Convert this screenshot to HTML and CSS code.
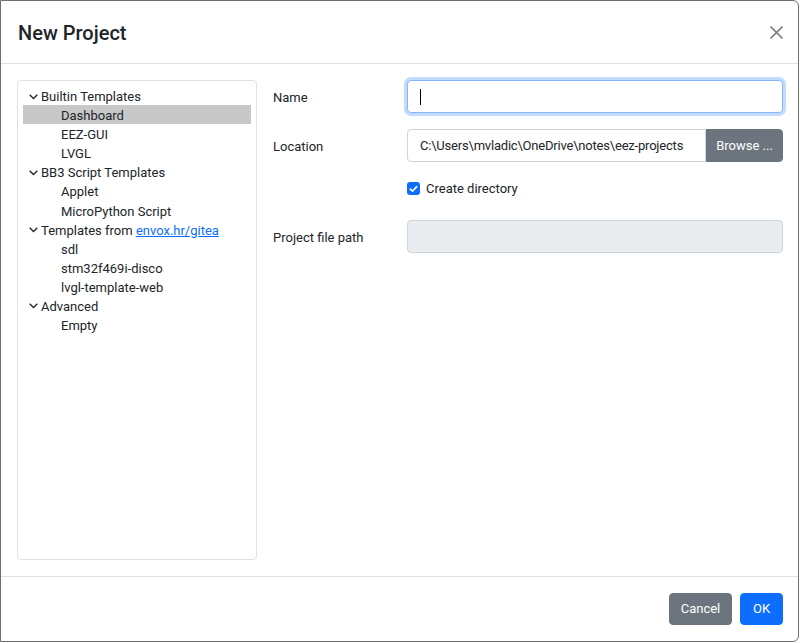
FILE: index.html
```html
<!DOCTYPE html>
<html>
<head>
<meta charset="utf-8">
<link rel="stylesheet" href="styles.css">
</head>
<body>
<div class="modal">
  <div class="modal-header">
    <h5 class="modal-title">New Project</h5>
    <button class="btn-close" aria-label="Close">
      <svg width="13" height="13" viewBox="0 0 13 13"><path d="M0.5 0.5 L12.5 12.5 M12.5 0.5 L0.5 12.5" stroke="#808080" stroke-width="1.6" fill="none"/></svg>
    </button>
  </div>
  <div class="modal-body">
    <div class="tree">
      <div class="tree-row group"><span class="chev"><svg width="9" height="6" viewBox="0 0 9 6"><path d="M0.7 0.7 L4.5 4.5 L8.3 0.7" stroke="#212529" stroke-width="1.3" fill="none"/></svg></span>Builtin Templates</div>
      <div class="tree-row item selected">Dashboard</div>
      <div class="tree-row item">EEZ-GUI</div>
      <div class="tree-row item">LVGL</div>
      <div class="tree-row group"><span class="chev"><svg width="9" height="6" viewBox="0 0 9 6"><path d="M0.7 0.7 L4.5 4.5 L8.3 0.7" stroke="#212529" stroke-width="1.3" fill="none"/></svg></span>BB3 Script Templates</div>
      <div class="tree-row item">Applet</div>
      <div class="tree-row item">MicroPython Script</div>
      <div class="tree-row group"><span class="chev"><svg width="9" height="6" viewBox="0 0 9 6"><path d="M0.7 0.7 L4.5 4.5 L8.3 0.7" stroke="#212529" stroke-width="1.3" fill="none"/></svg></span>Templates from&nbsp;<a href="#" class="link">envox.hr/gitea</a></div>
      <div class="tree-row item">sdl</div>
      <div class="tree-row item">stm32f469i-disco</div>
      <div class="tree-row item">lvgl-template-web</div>
      <div class="tree-row group"><span class="chev"><svg width="9" height="6" viewBox="0 0 9 6"><path d="M0.7 0.7 L4.5 4.5 L8.3 0.7" stroke="#212529" stroke-width="1.3" fill="none"/></svg></span>Advanced</div>
      <div class="tree-row item">Empty</div>
    </div>
    <div class="form">
      <div class="form-row">
        <label class="form-label">Name</label>
        <div class="control-wrap">
          <input class="form-control focused" type="text" value="">
          <span class="caret"></span>
        </div>
      </div>
      <div class="form-row">
        <label class="form-label">Location</label>
        <div class="input-group">
          <input class="form-control grouped" type="text" value="C:\Users\mvladic\OneDrive\notes\eez-projects">
          <button class="btn btn-secondary browse">Browse ...</button>
        </div>
      </div>
      <div class="form-row check-row">
        <span></span>
        <div class="form-check">
          <span class="checkbox"><svg width="9" height="8" viewBox="0 0 9 8"><path d="M1.3 4.2 L3.5 6.2 L7.7 1.6" stroke="#fff" stroke-width="1.6" fill="none" stroke-linecap="round" stroke-linejoin="round"/></svg></span>
          <span class="check-label">Create directory</span>
        </div>
      </div>
      <div class="form-row">
        <label class="form-label">Project file path</label>
        <input class="form-control disabled" type="text" value="" disabled>
      </div>
    </div>
  </div>
  <div class="modal-footer">
    <button class="btn btn-secondary cancel">Cancel</button>
    <button class="btn btn-primary ok">OK</button>
  </div>
</div>
</body>
</html>
```
FILE: styles.css
```css
html, body {
  margin: 0;
  padding: 0;
  background: #ffffff;
}
body {
  font-family: Roboto, "Liberation Sans", sans-serif;
  color: #212529;
  font-size: 14px;
}
.modal {
  width: 799px;
  height: 642px;
  box-sizing: border-box;
  border: 1px solid #6e6e6e;
  border-radius: 0 6px 6px 0;
  background: #fff;
  display: flex;
  flex-direction: column;
}
.modal-header {
  display: flex;
  align-items: center;
  justify-content: space-between;
  padding: 16px 15px 16px 16px;
  height: 63px;
  box-sizing: border-box;
  border-bottom: 1px solid #dee2e6;
  flex: none;
}
.modal-title {
  margin: 1px 0 0 1px;
  font-size: 20px;
  font-weight: 500;
  line-height: 30px;
  color: #212529;
}
.btn-close {
  border: 0;
  background: transparent;
  padding: 0;
  margin: 1px 0 0 0;
  width: 13px;
  height: 13px;
  display: flex;
}
.modal-body {
  flex: 1;
  display: flex;
  gap: 16px;
  padding: 16px 15px 16px 16px;
  min-height: 0;
}
.tree {
  width: 240px;
  box-sizing: border-box;
  border: 1px solid #dee2e6;
  border-radius: 4px;
  padding: 5px 5px;
  font-size: 13px;
  flex: none;
}
.tree-row {
  height: 19.08px;
  box-sizing: border-box;
  padding-top: 2px;
  line-height: 17px;
  display: flex;
  align-items: center;
  white-space: nowrap;
}
.tree-row.group {
  padding-left: 6px;
}
.chev {
  width: 12px;
  display: flex;
  align-items: center;
}
.tree-row.item {
  padding-left: 38px;
}
.tree-row.selected {
  background: #c8c8c8;
}
.link {
  color: #0d6efd;
  text-decoration: underline;
}
.form {
  flex: 1;
  display: flex;
  flex-direction: column;
}
.form-row {
  display: grid;
  grid-template-columns: 134px 1fr;
  align-items: center;
  margin-bottom: 16px;
}
.form-label {
  font-size: 13px;
  padding-top: 1px;
}
.control-wrap {
  position: relative;
  display: flex;
}
.form-control {
  box-sizing: border-box;
  width: 100%;
  height: 33px;
  padding: 5px 12px;
  font-family: inherit;
  font-size: 13px;
  color: #212529;
  border: 1px solid #ced4da;
  border-radius: 4px;
  background: #fff;
  outline: none;
}
.form-control.focused {
  border-color: #86b7fe;
  box-shadow: 0 0 0 3px rgba(13, 110, 253, 0.25);
  caret-color: transparent;
}
.caret {
  position: absolute;
  left: 13px;
  top: 9px;
  width: 1px;
  height: 16px;
  background: #000;
}
.input-group {
  display: flex;
}
.form-control.grouped {
  border-radius: 4px 0 0 4px;
  flex: 1;
  min-width: 0;
  letter-spacing: -0.2px;
}
.form-control.disabled {
  background: #e9ecef;
}
.btn {
  font-family: inherit;
  font-size: 13px;
  line-height: 20px;
  padding: 5px 0;
  border: 1px solid transparent;
  border-radius: 4px;
  color: #fff;
  cursor: pointer;
  text-align: center;
}
.btn-secondary {
  background: #6c757d;
  border-color: #6c757d;
}
.btn-primary {
  background: #0d6efd;
  border-color: #0d6efd;
}
.browse {
  border-radius: 0 4px 4px 0;
  width: 77px;
  flex: none;
}
.check-row {
  margin-top: 0;
  margin-bottom: 21px;
}
.form-check {
  display: flex;
  align-items: center;
  height: 21px;
}
.checkbox {
  width: 13px;
  height: 13px;
  box-sizing: border-box;
  border-radius: 3px;
  background: #0d6efd;
  display: flex;
  align-items: center;
  justify-content: center;
  margin-right: 6px;
}
.check-label {
  font-size: 13px;
}
.modal-footer {
  flex: none;
  border-top: 1px solid #dee2e6;
  padding: 16px 15px 16px 16px;
  display: flex;
  justify-content: flex-end;
  gap: 8px;
}
.modal-footer .btn {
  height: 32px;
  line-height: 20px;
}
.cancel {
  width: 63px;
}
.ok {
  width: 43px;
}
```
